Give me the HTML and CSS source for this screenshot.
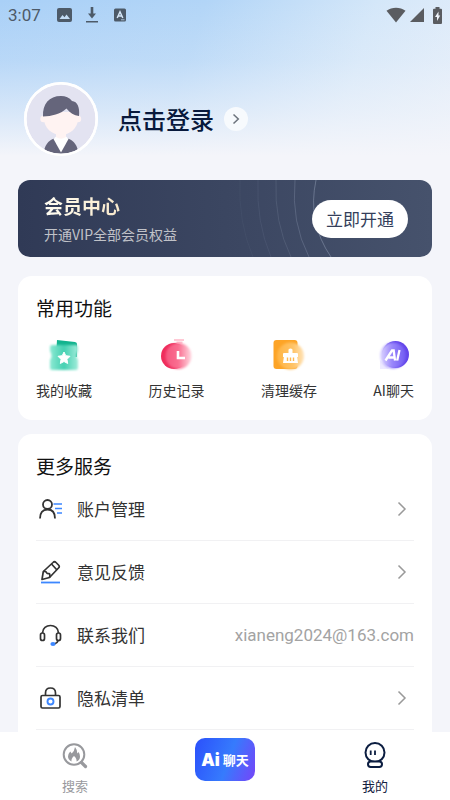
FILE: index.html
```html
<!DOCTYPE html>
<html lang="zh-CN">
<head>
<meta charset="utf-8">
<meta name="viewport" content="width=device-width, initial-scale=1">
<title>我的</title>
<link rel="stylesheet" href="styles.css">
</head>
<body>
<div class="app">
  <main class="content">
    <header class="status">
      <span class="clock">3:07</span>
      <svg class="st-pic" width="15" height="14" viewBox="0 0 15 14" aria-hidden="true"><rect width="15" height="14" rx="2" fill="#4d5a68"/><path d="M2.500 11l3-4 2 2.200 2-2.700 3.500 4.500z" fill="#c3dcf5"/></svg>
      <svg class="st-down" width="12" height="16" viewBox="0 0 12 16" aria-hidden="true"><path d="M4.700 0h2.600v6.500H10L6 11.500 2 6.500h2.700zM0 14h12v1.600H0z" fill="#4d5a68"/></svg>
      <svg class="st-a" width="12" height="14" viewBox="0 0 12 14" aria-hidden="true"><rect y="0.500" width="12" height="13" rx="1.500" fill="#4d5a68"/><path d="M3.200 10L6 3.800 8.800 10M4.200 8h3.600" fill="none" stroke="#d5e6f7" stroke-width="1.500"/><path d="M7 11.800h3.500" stroke="#a9bfd5"/></svg>
      <span class="spacer"></span>
      <svg width="20" height="16" viewBox="0 0 20 16" aria-hidden="true"><path d="M.5 3.800C6-.2 14-.2 19.500 3.800L10 15.500z" fill="#5a5c60"/></svg>
      <svg class="st-signal" width="14" height="14" viewBox="0 0 14 14" aria-hidden="true"><path d="M14 0v14H0z" fill="#5a5c60"/></svg>
      <svg class="st-battery" width="9" height="17" viewBox="0 0 9 17" aria-hidden="true"><path d="M2.500 0h4v1.700H8q1 0 1 1V16q0 1-1 1H1q-1 0-1-1V2.700q0-1 1-1h1.500z" fill="#5a5c60"/><path d="M5.500 4.500L2 10h2v4l3.200-5.500H5.500z" fill="#f1f5fb"/></svg>
    </header>

    <button class="profile" type="button">
      <svg class="avatar" width="74" height="74" viewBox="0 0 74 74" aria-hidden="true">
        <defs><clipPath id="face"><circle cx="37" cy="37" r="35"/></clipPath></defs>
        <circle cx="37" cy="37" r="37" fill="#fff"/>
        <circle cx="37" cy="37" r="34.500" fill="#e3e3f1"/>
        <g clip-path="url(#face)">
          <path d="M19.500 74c0-9 4-15.500 11-17.500h13C50.500 58.500 54.500 65 54.500 74z" fill="#65657b"/>
          <path d="M29.500 57l3-3h9l3 3-7.500 13.500z" fill="#fff"/>
          <path d="M32 48h10v7q-5 3.500-10 0z" fill="#fff3f2"/>
          <circle cx="19.500" cy="37" r="3.200" fill="#fff3f2"/><circle cx="54" cy="37" r="3.200" fill="#fff3f2"/>
          <path d="M20 30h34v7c0 9-8.500 16-17 16s-17-7-17-16z" fill="#fff3f2"/>
          <path d="M19 34.500C18.500 22 25 14 37 14c4.500 0 8.500 1.500 11 5 5.500.5 8 6.500 7 15-5-.5-9-3-12.500-7.500C36 32.500 28 34 19 34.500z" fill="#65657b"/>
        </g>
        <circle cx="37" cy="37" r="35.750" fill="none" stroke="#fff" stroke-width="2.500"/>
      </svg>
      <span class="login">点击登录</span>
      <span class="go"><svg width="8" height="12" viewBox="0 0 8 12" aria-hidden="true"><path d="M1.500 1.500L6.300 6l-4.800 4.500" fill="none" stroke="#6c737c" stroke-width="1.500"/></svg></span>
    </button>

    <section class="vip">
      <svg class="rings" width="160" height="77" viewBox="0 0 160 77" aria-hidden="true"><g fill="none" stroke="#a8b3ca"><path d="M6 0q-2 42 13 77" opacity=".06"/><path d="M24 0q-2 42 13 77" opacity=".1"/><path d="M42 0q-2 42 15 77" opacity=".16"/><path d="M61 0q-4 42 14 77" opacity=".26"/><path d="M82 0q-9 42 15 77" opacity=".4"/></g></svg>
      <div class="vip-text">
        <h2>会员中心</h2>
        <p>开通VIP全部会员权益</p>
      </div>
      <button class="open" type="button">立即开通</button>
    </section>

    <section class="card common">
      <h3>常用功能</h3>
      <div class="tools">
        <button type="button">
          <svg width="36" height="34" viewBox="0 0 36 34" aria-hidden="true">
            <defs><linearGradient id="g1" x2="1"><stop stop-color="#8ce9d3"/><stop offset=".5" stop-color="#45d0b1"/><stop offset="1" stop-color="#a0ecda"/></linearGradient><filter id="b1"><feGaussianBlur stdDeviation=".8"/></filter></defs>
            <path d="M11 2l18 2q2 .3 2 2v13H10z" fill="#12b38e"/>
            <path d="M6 7h24q2 0 2 2v4q-3 5 0 9v8q0 2-2 2H6q-2 0-2-2v-8q3-4 0-9V9q0-2 2-2z" fill="url(#g1)" filter="url(#b1)"/>
            <path d="M18 14l1.800 3.700 4.200.6-3 3 .7 4.200-3.700-2-3.700 2 .7-4.200-3-3 4.200-.6z" fill="#fff" stroke="#fff" stroke-linejoin="round"/>
          </svg><span>我的收藏</span>
        </button>
        <button type="button">
          <svg width="36" height="34" viewBox="0 0 36 34" aria-hidden="true">
            <defs><linearGradient id="g2" x2="1"><stop stop-color="#f5577f"/><stop offset=".5" stop-color="#fa6f91"/><stop offset="1" stop-color="#ffd8e1"/></linearGradient></defs>
            <circle cx="16" cy="18" r="13" fill="#ef2d5c"/><path d="M16 2h10M18.500 4.500h6" stroke="#ffc9d5" stroke-width="2"/>
            <circle cx="20.500" cy="18" r="13" fill="url(#g2)" filter="url(#b1)"/>
            <path d="M20 13v7h7" fill="none" stroke="#fff" stroke-width="2.600"/>
          </svg><span>历史记录</span>
        </button>
        <button type="button">
          <svg width="36" height="34" viewBox="0 0 36 34" aria-hidden="true">
            <defs><linearGradient id="g3" x2="1"><stop stop-color="#ffb545"/><stop offset=".6" stop-color="#ffc366"/><stop offset="1" stop-color="#ffe5bd"/></linearGradient></defs>
            <rect x="2.500" y="2" width="24" height="29" rx="3" fill="#fda427"/><circle cx="19.500" cy="18" r="13.500" fill="url(#g3)" filter="url(#b1)"/>
            <path d="M17.500 11.500q2-2 4 0V15H26q1 0 1 1v3H12v-3q0-1 1-1h4.500zM13 18h13l1 7H12z" fill="#fff"/><path d="M16.500 19.500V23M19.500 19.500V23M22.500 19.500V23" stroke="#ffb84e" stroke-width="1.400"/>
          </svg><span>清理缓存</span>
        </button>
        <button type="button">
          <svg width="36" height="34" viewBox="0 0 36 34" aria-hidden="true">
            <defs><linearGradient id="g4" x2="1"><stop stop-color="#e0d9ff"/><stop offset=".45" stop-color="#9b88fb"/><stop offset="1" stop-color="#7059f2"/></linearGradient></defs>
            <circle cx="19.500" cy="16.500" r="13.500" fill="#6346ea"/><path d="M4 22v9h9z" fill="#eeeaff"/><circle cx="17" cy="17.500" r="13" fill="url(#g4)" filter="url(#b1)"/>
            <path d="M9.500 22.500l6.500-10h1.700l1.300 10M12.500 19.500h5.500M23.500 12l-2.300 10.500" fill="none" stroke="#fff" stroke-width="2.300"/>
          </svg><span>AI聊天</span>
        </button>
      </div>
    </section>

    <section class="card more">
      <h3>更多服务</h3>
      <ul class="rows">
        <li><a href="#account">
          <svg width="26" height="26" viewBox="0 0 26 26" aria-hidden="true"><g fill="none" stroke="#333" stroke-width="1.800"><circle cx="11.500" cy="8.500" r="4.500"/><path d="M4 22.500q0-9 7.500-9t7.500 9"/></g><path d="M17.500 8H26M19 12.500h7M21 17h5" stroke="#3d87ff" stroke-width="1.700"/></svg>
          <span class="label">账户管理</span><svg class="chev" width="10" height="16" viewBox="0 0 10 16" aria-hidden="true"><path d="M1.500 1.500L8 8l-6.500 6.500"/></svg></a></li>
        <li><a href="#feedback">
          <svg width="26" height="26" viewBox="0 0 26 26" aria-hidden="true"><g fill="none" stroke="#333" stroke-width="1.700" stroke-linejoin="round"><path d="M6 20.500l1.300-8L17 3.500q1.500-1.500 3 0l2.500 2.500q1.500 1.500 0 3L13.500 18.500z"/><path d="M15.500 5l5.500 6M7.500 12.500q2.500-.5 3 1t2.500 1q1.500.5.500 4"/></g><path d="M5 23.500h19" stroke="#3d87ff" stroke-width="1.800"/></svg>
          <span class="label">意见反馈</span><svg class="chev" width="10" height="16" viewBox="0 0 10 16" aria-hidden="true"><path d="M1.500 1.500L8 8l-6.500 6.500"/></svg></a></li>
        <li><a href="#contact">
          <svg width="26" height="26" viewBox="0 0 26 26" aria-hidden="true"><g fill="none" stroke="#333" stroke-width="1.700"><path d="M6.500 11C6.500 1 22.500 1 22.500 11M22.500 18q-1 3-4 4"/><rect x="4.500" y="11" width="4" height="7.500" rx="2"/><rect x="20.500" y="11" width="4" height="7.500" rx="2"/></g><ellipse cx="17" cy="22" rx="2.600" ry="2" fill="#3d87ff"/></svg>
          <span class="label">联系我们</span><span class="mail">xianeng2024@163.com</span></a></li>
        <li><a href="#privacy">
          <svg width="26" height="26" viewBox="0 0 26 26" aria-hidden="true"><g fill="none" stroke="#333" stroke-width="1.700"><rect x="5" y="10.500" width="19" height="12.500" rx="1.500"/><path d="M9.500 10.500V8q0-5 5-5t5 5v2.500"/></g><circle cx="14.500" cy="16.500" r="3" fill="none" stroke="#3d87ff" stroke-width="1.900"/></svg>
          <span class="label">隐私清单</span><svg class="chev" width="10" height="16" viewBox="0 0 10 16" aria-hidden="true"><path d="M1.500 1.500L8 8l-6.500 6.500"/></svg></a></li>
      </ul>
    </section>
  </main>

  <nav class="tabs">
    <a class="tab" href="#search">
      <svg width="28" height="28" viewBox="0 0 28 28" aria-hidden="true"><g fill="none" stroke="#98999d"><circle cx="13" cy="12.500" r="10.300" stroke-width="2"/><path d="M20.500 20.500l4 4" stroke-width="3.200" stroke-linecap="round"/></g><path d="M14 5q-.5 4-3.300 6.500l-1.500-2Q7 12 7 14.500q0 3 3.500 5-.5-3 2.500-5.500 3 2.500 2.500 5.500 3.500-1.500 3.500-5 0-2.500-1.500-4.500l-1.200 1.500Q16.500 8 14 5z" fill="#98999d"/></svg>
      <span>搜索</span></a>
    <a class="chat" href="#chat"><b class="ai">Ai</b><b>聊天</b></a>
    <a class="tab active" href="#me" aria-current="page">
      <svg width="28" height="28" viewBox="0 0 28 28" aria-hidden="true"><g fill="none" stroke="#0b1d40" stroke-width="2"><circle cx="14" cy="10.500" r="9.500"/><rect x="7" y="19.500" width="14" height="5.500" rx="2.700" fill="#fff"/></g><path d="M9.700 8.500v4.500M14 8.500v4.500" stroke="#0b1d40" stroke-width="1.800"/></svg>
      <span>我的</span></a>
  </nav>
</div>
</body>
</html>
```

FILE: styles.css
```css
* { box-sizing: border-box; }

body {
  margin: 0;
  font-family: "Noto Sans CJK SC", sans-serif;
  color: #333;
  background: #f4f5fa;
}

h2, h3, p, ul { margin: 0; padding: 0; }
a { color: inherit; text-decoration: none; }
svg { display: block; flex: none; }
button {
  border: 0;
  padding: 0;
  background: none;
  font: inherit;
  color: inherit;
  cursor: pointer;
}

.app {
  display: flex;
  flex-direction: column;
  height: 100vh;
}

.content {
  flex: 1;
  min-height: 0;
  overflow-y: auto;
  scrollbar-width: none;
  padding: 0 18px;
  background:
    linear-gradient(180deg, rgba(244, 245, 250, 0) 0, rgba(244, 245, 250, .2) 60px, rgba(244, 245, 250, .6) 112px, #f4f5fa 156px),
    linear-gradient(108deg, #a9d0f7 0, #b2d5f7 30%, #d4e7f9 55%, #e7effa 78%, #edf2fb 100%);
}

.status {
  display: flex;
  align-items: center;
  height: 30px;
  margin: 0 -10px;
}
.clock {
  width: 49px;
  font-family: Roboto, sans-serif;
  font-size: 17px;
  line-height: 30px;
  color: #4d5a68;
}
.st-down { margin-left: 14px; }
.st-a { margin-left: 16px; }
.spacer { flex: 1; }
.st-signal { margin-left: 4px; }
.st-battery { margin-left: 9px; }

.profile {
  display: flex;
  align-items: center;
  margin: 52px 0 24px 6px;
}
.login {
  margin-left: 20px;
  font-size: 24px;
  line-height: 32px;
  font-weight: 500;
  color: #08193c;
}
.go {
  display: flex;
  align-items: center;
  justify-content: center;
  width: 24px;
  height: 24px;
  margin-left: 10px;
  border-radius: 50%;
  background: #f7fafd;
}

.vip {
  position: relative;
  display: flex;
  align-items: center;
  justify-content: space-between;
  min-height: 77px;
  padding: 0 24px 0 26px;
  border-radius: 12px;
  overflow: hidden;
  background: linear-gradient(90deg, #303a56, #3b4661 50%, #46526c);
}
.rings {
  position: absolute;
  top: 0;
  right: 38px;
  height: 100%;
}
.vip-text, .open { position: relative; }
.vip h2 {
  font-size: 19px;
  line-height: 28px;
  font-weight: 700;
  color: transparent;
  background: linear-gradient(90deg, #fffdf2, #f3d9ae);
  background-clip: text;
}
.vip p {
  margin-top: 2px;
  font-size: 14px;
  line-height: 24px;
  color: #c0c2c8;
}
.open {
  height: 38px;
  padding: 0 14px;
  border-radius: 19px;
  background: #fff;
  font-size: 17px;
  color: #343e5a;
}

.card {
  padding: 18px 18px 0;
  border-radius: 14px;
  background: #fff;
}
.card h3 {
  font-size: 19px;
  line-height: 28px;
  font-weight: 400;
  color: #111;
}
.common { margin-top: 19px; padding-bottom: 18px; }
.tools {
  display: flex;
  justify-content: space-between;
  margin-top: 16px;
}
.tools button {
  display: flex;
  flex-direction: column;
  align-items: center;
  gap: 6px;
  font-size: 14px;
  line-height: 24px;
}

.more {
  margin: 14px 0 18px;
  padding-bottom: 18px;
}
.more h3 { margin-bottom: -2px; }
.rows { list-style: none; }
.rows li { border-bottom: 1px solid #f1f1f3; }
.rows a {
  display: flex;
  align-items: center;
  height: 62px;
}
.label {
  flex: 1;
  margin-left: 15px;
  font-size: 17px;
  line-height: 24px;
}
.chev {
  margin-right: 7px;
  fill: none;
  stroke: #999;
  stroke-width: 1.5px;
}
.mail {
  font-family: Roboto, sans-serif;
  font-size: 17px;
  color: #a3a3a3;
}

.tabs {
  display: grid;
  grid-template-columns: repeat(3, 1fr);
  justify-items: center;
  align-items: start;
  height: 68px;
  background: #fff;
}
.tab {
  display: flex;
  flex-direction: column;
  align-items: center;
  gap: 4px;
  padding-top: 10px;
  font-size: 13px;
  line-height: 24px;
  color: #98999d;
}
.active { color: #14213f; }
.chat {
  display: flex;
  align-items: center;
  justify-content: center;
  gap: 3px;
  width: 60px;
  height: 43px;
  margin-top: 6px;
  border-radius: 10px;
  background: linear-gradient(110deg, #2b50fb, #367bfd 55%, #5a5cfb 80%, #7645f8);
  font-size: 13px;
  line-height: 20px;
  color: #fff;
}
.ai {
  font-family: Inter, sans-serif;
  font-size: 17px;
  font-weight: 900;
}
```
